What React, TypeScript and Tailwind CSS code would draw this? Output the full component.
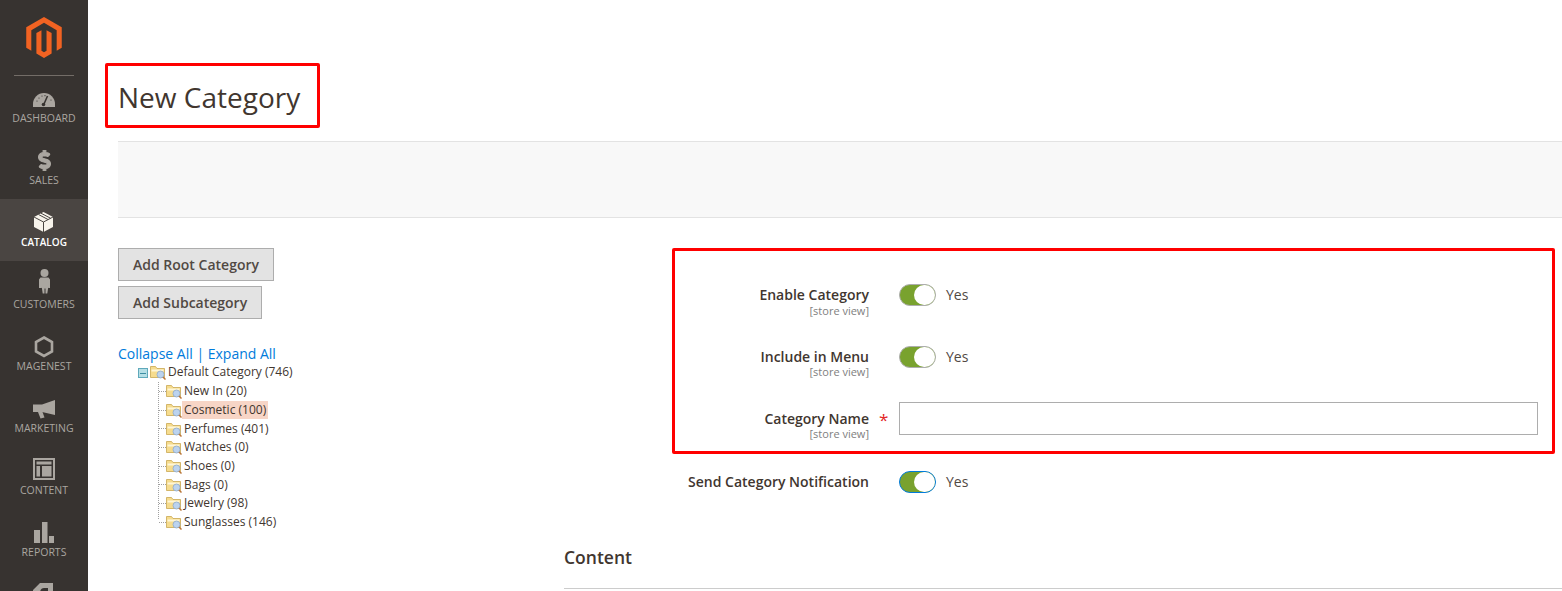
import React from "react";
import { FaDollarSign } from "react-icons/fa";

const C = "#aaa6a0";
const D = "#373330";

function Frame({ children, light }: { children: React.ReactNode; light?: boolean }) {
  return (
    <svg viewBox="0 0 40 30" fill={light ? "#f7f3eb" : C} className="w-[40px] h-[30px] mt-[6px] shrink-0">
      {children}
    </svg>
  );
}

const items: { label: string; active?: boolean; icon: React.ReactNode }[] = [
  {
    label: "DASHBOARD",
    icon: (
      <Frame>
        <path d="M9 26v-3a11 11 0 0 1 22 0v3z" />
        <path d="M20 23l3.5-8" stroke={D} strokeWidth="1.6" />
        <circle cx="19.5" cy="23.5" r="1.8" fill={D} />
        <g fill={D}>
          <circle cx="13" cy="20" r=".6" />
          <circle cx="15" cy="17" r=".6" />
          <circle cx="18" cy="15" r=".6" />
          <circle cx="21" cy="14.7" r=".6" />
          <circle cx="27" cy="19" r=".6" />
        </g>
      </Frame>
    ),
  },
  {
    label: "SALES",
    icon: (
      <div className="w-[40px] h-[30px] mt-[6px] pt-[7px] flex justify-center shrink-0">
        <FaDollarSign className="w-[15px] h-[21px] text-[#aaa6a0]" stroke="#aaa6a0" strokeWidth={30} />
      </div>
    ),
  },
  {
    label: "CATALOG",
    active: true,
    icon: (
      <Frame light>
        <path d="M19.5 7l9.5 5v10l-9.5 5-9.5-5V12z" />
        <path d="M10 12l9.5 5 9.5-5M19.5 17v10" stroke="#4a4542" strokeWidth="1" fill="none" />
        <path d="M14.5 9.5l9.5 5M17 8.2l9.5 5" stroke="#4a4542" strokeWidth="1" fill="none" />
      </Frame>
    ),
  },
  {
    label: "CUSTOMERS",
    icon: (
      <Frame>
        <circle cx="20.5" cy="6" r="4" />
        <path d="M16.5 10.5h8l1.5 2v8.5h-1.7v-1l-1 6.500h-1.800v-5h-1v5h-1.800l-1-6.500v1H15v-8.500z" />
      </Frame>
    ),
  },
  {
    label: "MAGENEST",
    icon: (
      <Frame>
        <path d="M20 8.500l8 4.500v9.500l-8 4.500-8-4.500V13z" fill="none" stroke={C} strokeWidth="2.600" />
      </Frame>
    ),
  },
  {
    label: "MARKETING",
    icon: (
      <Frame>
        <path d="M31 9v15l-13-3H9v-7.500h9z" />
        <path d="M14 21h4.500l2 5.500-4 1z" />
      </Frame>
    ),
  },
  {
    label: "CONTENT",
    icon: (
      <Frame>
        <path fillRule="evenodd" d="M9 5h22v22H9zM11 7v18h18V7z" />
        <path d="M12.500 8.500h15v3h-15zM12.500 13h3.500v10.500h-3.500zM18 13h9.500v10.500H18z" />
      </Frame>
    ),
  },
  {
    label: "REPORTS",
    icon: (
      <Frame>
        <path d="M10 15h6v13h-6zM18 7h5.500v21H18zM25 21h5v7h-5z" />
      </Frame>
    ),
  },
  {
    label: "",
    icon: (
      <Frame>
        <path fillRule="evenodd" d="M16 6h13v24H9V13zM20 11c-2.500 0-4 2-4 5v14h8V11z" />
      </Frame>
    ),
  },
];

function Folder() {
  return (
    <svg viewBox="0 0 16 16" className="w-[16px] h-[16px] shrink-0">
      <path d="M.5 2.500h5l1.500 2h7.500v9H.5z" fill="#f6dc8e" stroke="#c9a752" strokeWidth=".8" />
      <path d="M1.500 5.500h12v2h-12z" fill="#fff6d6" />
      <circle cx="10.500" cy="10.500" r="3.500" fill="#bcd3ee" stroke="#8fa9c9" strokeWidth=".8" />
      <path d="M13 13l2.500 2.500" stroke="#b9763a" strokeWidth="1.500" />
    </svg>
  );
}

const nodes = [
  "New In (20)",
  "Cosmetic (100)",
  "Perfumes (401)",
  "Watches (0)",
  "Shoes (0)",
  "Bags (0)",
  "Jewelry (98)",
  "Sunglasses (146)",
];

function Toggle({ focus }: { focus?: boolean }) {
  return (
    <div className="flex items-center gap-[10px] h-[22px]">
      <div
        className={
          focus
            ? "w-[37px] h-[22px] rounded-full bg-[#79a22e] border border-[#007bdb] flex justify-end"
            : "w-[37px] h-[22px] rounded-full bg-[#79a22e] border border-[#adadad] flex justify-end"
        }
      >
        <div className="w-[21px] h-[20px] rounded-full bg-white" />
      </div>
      <span className="text-[14px] leading-[20px] mb-px text-[#514943]">Yes</span>
    </div>
  );
}

function Label({
  text,
  scope = true,
  required,
  top,
  scopeGap = "-mt-px",
}: {
  text: string;
  scope?: boolean;
  required?: boolean;
  top: string;
  scopeGap?: string;
}) {
  return (
    <div className={`w-[335px] shrink-0 flex ${top}`}>
      <div className="w-[305px] text-right">
        <div className="text-[14px] leading-[20px] font-semibold text-[#41362f]">{text}</div>
        {scope && <div className={`text-[11px] leading-[12px] ${scopeGap} text-[#808080]`}>[store view]</div>}
      </div>
      {required && <span className="ml-[10px] text-[17px] leading-[22px] text-[#e22626]">*</span>}
    </div>
  );
}

export default function App() {
  return (
    <div className="relative flex h-[591px] w-[1562px] overflow-hidden bg-white font-['Open_Sans',sans-serif]">
      <nav className="w-[88px] shrink-0 h-full bg-[#373330] flex flex-col items-center">
        <div className="w-full h-[75px] shrink-0 flex justify-center pt-[17px]">
          <svg viewBox="1.6 0 20.8 24" fill="#f26322" className="w-[36px] h-[41px]">
            <path d="M12 24l-4.455-2.572v-12l2.97-1.715v12.001l1.485.902 1.485-.902V7.713l2.971 1.715v12L12 24zM22.391 6v12l-2.969 1.714V7.713L12 3.430 4.574 7.713v12.001L1.609 18V6L12 0l10.391 6z" />
          </svg>
        </div>
        <div className="w-[60px] h-px bg-[#736d67] shrink-0 -mb-px" />
        {items.map((it, i) => (
          <div
            key={i}
            className={
              it.active
                ? "w-full h-[62px] shrink-0 flex flex-col items-center bg-[#4a4542] text-white font-semibold"
                : "w-full h-[62px] shrink-0 flex flex-col items-center text-[#aaa6a0]"
            }
          >
            {it.icon}
            {it.label && (
              <span className={it.active ? "text-[10px] leading-[14px]" : "text-[10.5px] leading-[14px]"}>{it.label}</span>
            )}
          </div>
        ))}
      </nav>

      <main className="flex-1 min-w-0 pl-[30px]">
        <h1 className="h-[141px] pt-[77px] text-[28px] leading-[40px] text-[#41362f]">New Category</h1>
        <div className="h-[77px] bg-[#f8f8f8] border-y border-[#e3e3e3]" />

        <div className="flex pt-[30px]">
          <section className="w-[446px] shrink-0">
            <button className="block h-[33px] px-[14px] bg-[#e3e3e3] border border-[#adadad] text-[14px] font-semibold text-[#514943]">
              Add Root Category
            </button>
            <button className="block mt-[5px] h-[33px] px-[14px] bg-[#e3e3e3] border border-[#adadad] text-[14px] font-semibold text-[#514943]">
              Add Subcategory
            </button>

            <div className="mt-[25px] text-[14px] leading-[20px] text-[#007bdb]">Collapse All | Expand All</div>

            <div className="ml-[20px] text-[12px] text-[#41362f]">
              <div className="flex items-center h-[16px]">
                <div className="w-[10px] h-[10px] mt-[2px] bg-[#b5dfe6] border border-[#5fa9bb] flex items-center justify-center">
                  <div className="w-[6px] h-px bg-[#3d8ea3]" />
                </div>
                <div className="ml-[2px]">
                  <Folder />
                </div>
                <span className="ml-[2px]">Default Category (746)</span>
              </div>
              <div className="ml-[20px] mt-[3px] border-l border-dotted border-[#a0a0a0] w-fit h-[137px]">
                {nodes.map((n) => (
                  <div key={n} className="flex items-center h-[18.700px] first:-mt-px">
                    <div className="w-[7px] border-t border-dotted border-[#a0a0a0]" />
                    <Folder />
                    <span
                      className={
                        n.startsWith("Cosmetic")
                          ? "px-[2px] h-[18px] leading-[18px] bg-[#f7d5c6] whitespace-nowrap"
                          : "ml-[2px] whitespace-nowrap"
                      }
                    >
                      {n}
                    </span>
                  </div>
                ))}
              </div>
            </div>
          </section>

          <section className="flex-1 min-w-0 pt-[36px]">
            <div className="flex h-[62px]">
              <Label text="Enable Category" top="pt-px" scopeGap="mt-0" />
              <Toggle />
            </div>
            <div className="flex h-[56px]">
              <Label text="Include in Menu" top="pt-px" />
              <Toggle />
            </div>
            <div className="flex h-[69px] pr-[24px]">
              <Label text="Category Name" required top="pt-[7px]" />
              <input className="flex-1 min-w-0 h-[33px] bg-white border border-[#adadad]" />
            </div>
            <div className="flex h-[64px]">
              <Label text="Send Category Notification" scope={false} top="pt-px" />
              <Toggle focus />
            </div>
            <h2 className="h-[54px] pt-[10px] text-[17.500px] leading-[24px] font-semibold text-[#41362f] border-b border-[#ccc]">
              Content
            </h2>
          </section>
        </div>
      </main>

      <div className="absolute left-[105px] top-[63px] w-[215px] h-[65px] border-[3px] border-[#f00] rounded-[2px]" />
      <div className="absolute left-[672px] top-[248px] w-[883px] h-[206px] border-[3px] border-[#f00] rounded-[2px]" />
    </div>
  );
}
